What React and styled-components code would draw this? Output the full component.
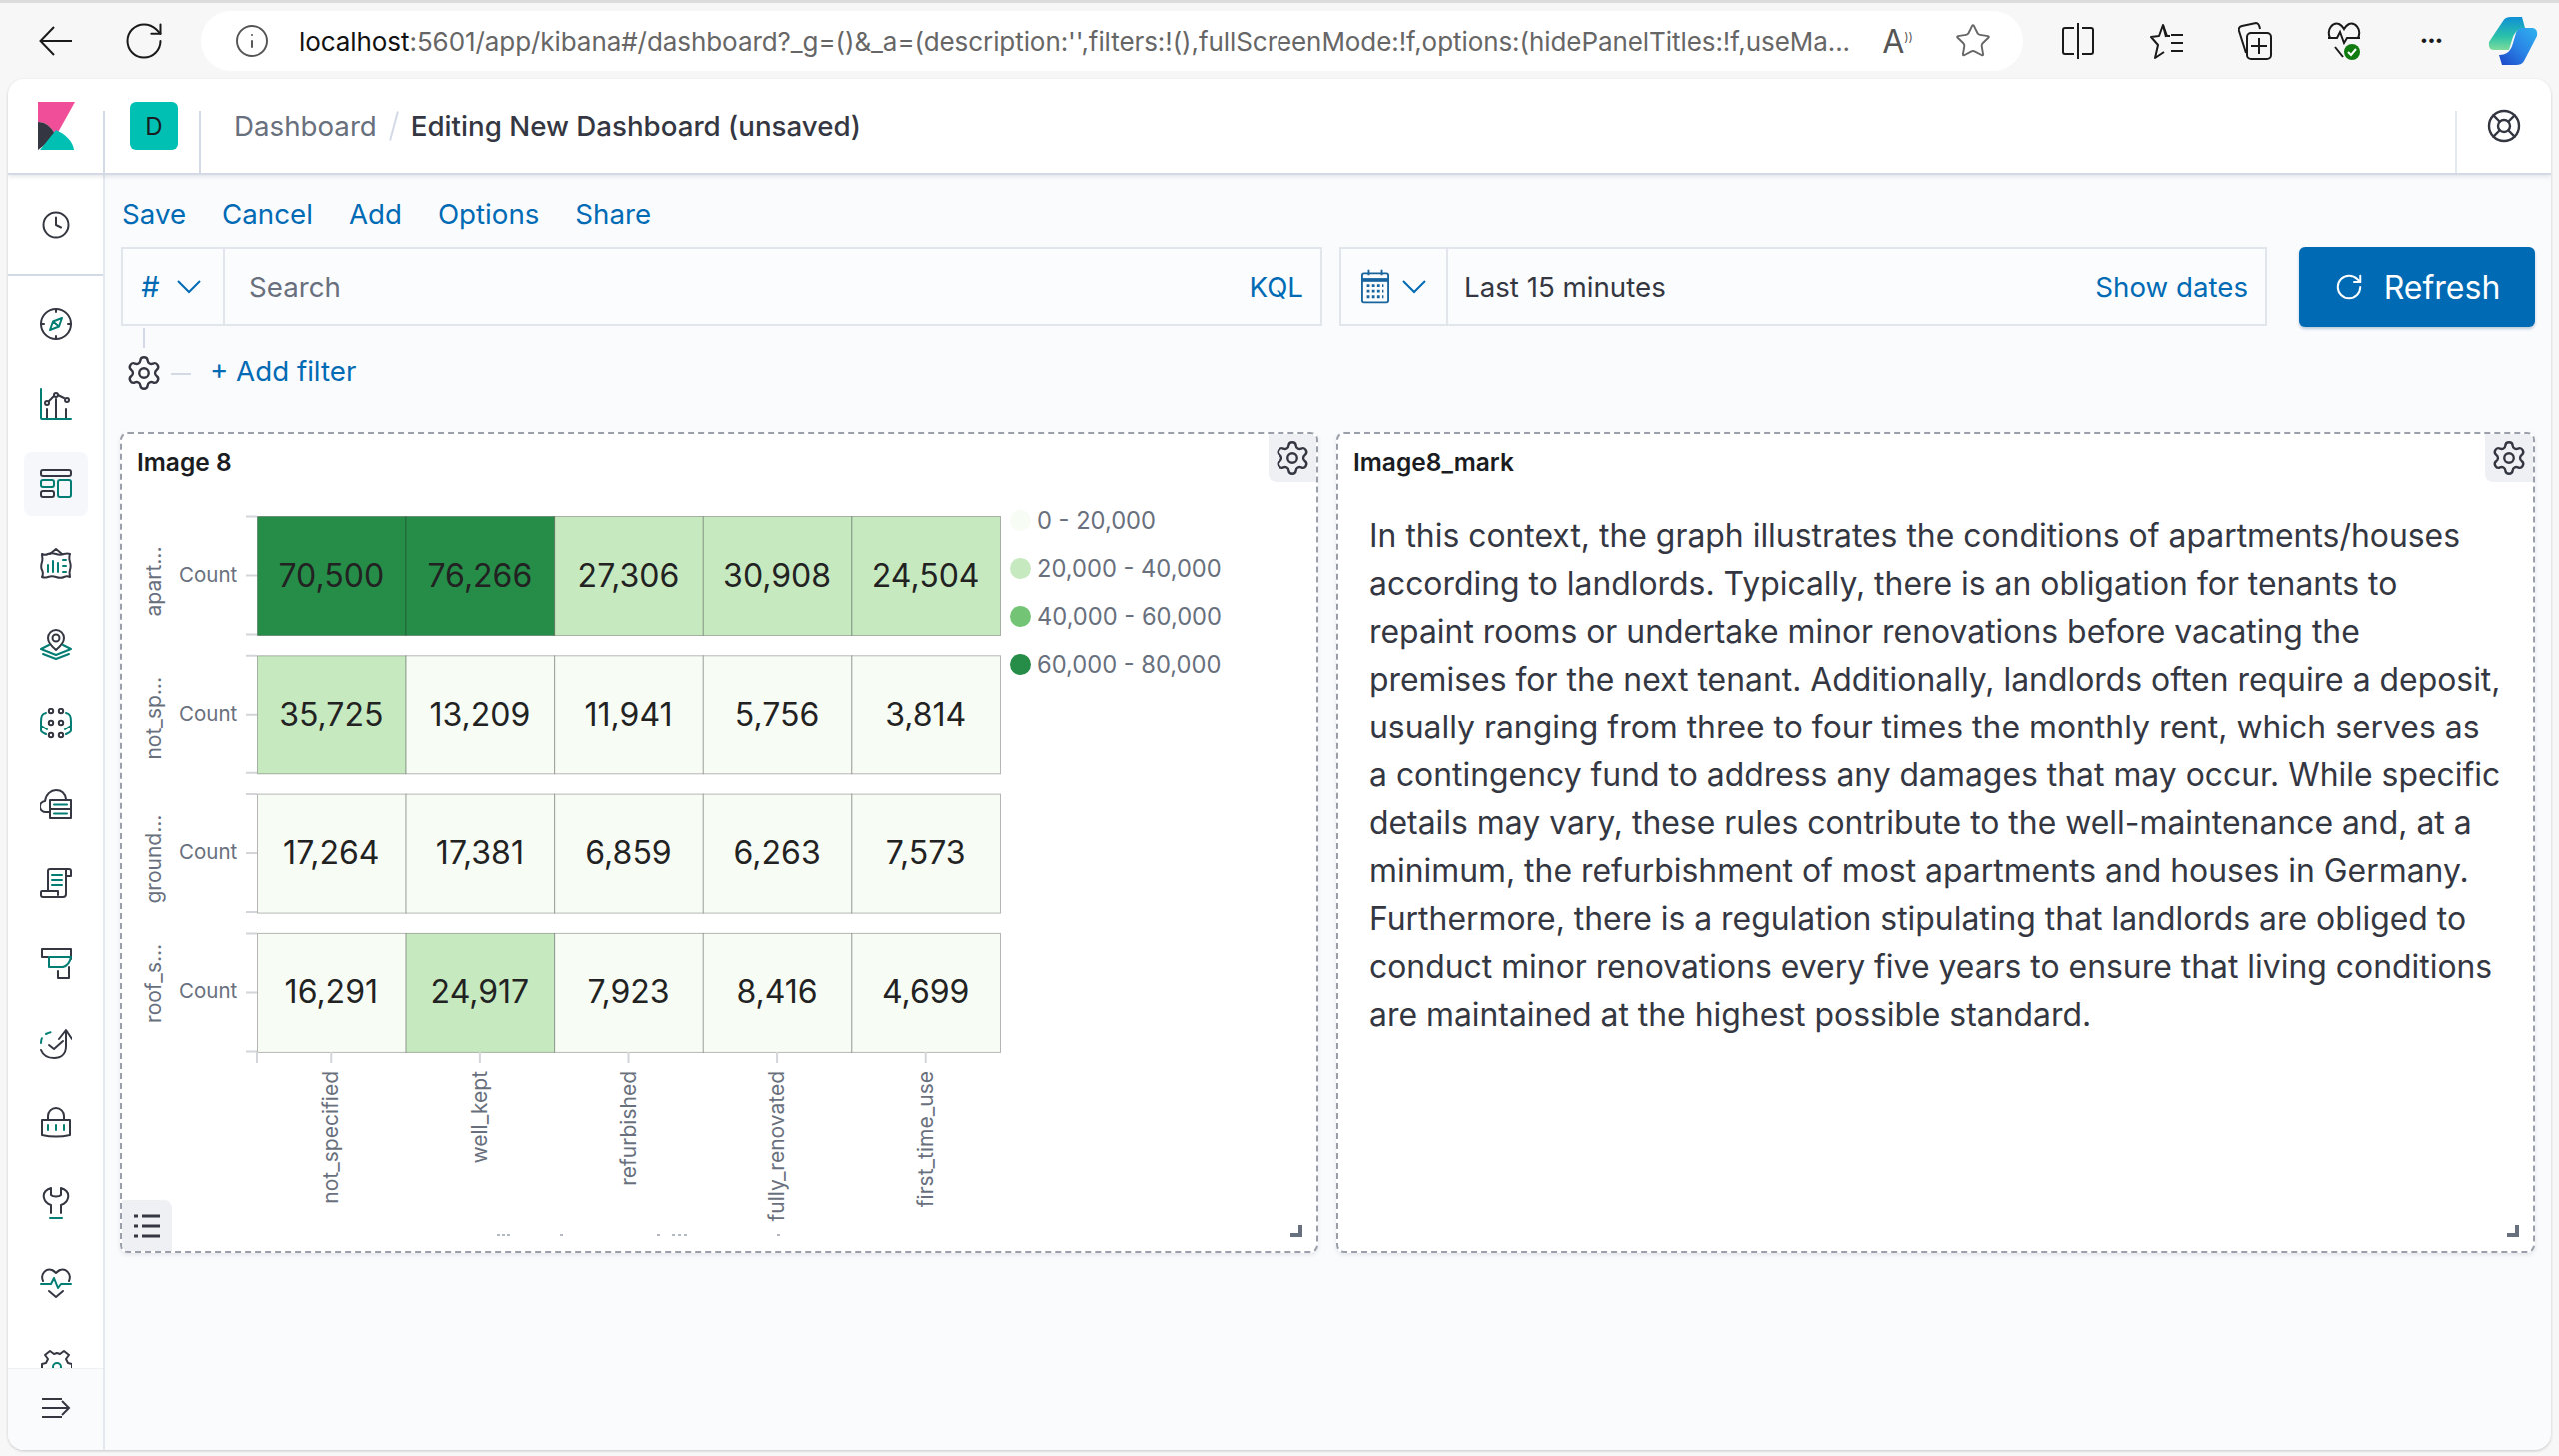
import React from 'react'
import styled, { createGlobalStyle } from 'styled-components'
import { Info, Star, RotateCw, Clock, Settings, LifeBuoy } from 'lucide-react'

const GlobalStyle = createGlobalStyle`
  html, body { margin: 0; padding: 0; background: #f7f7f7; }
  body { font-family: Inter, "Liberation Sans", sans-serif; color: #343741; }
  * { box-sizing: border-box; }
`

const INK = '#343741'
const TEAL = '#017d73'

// sidebar icons, drawn on a 32 box: dark strokes + teal accent strokes
const NavIcon = ({ dark, teal }) => (
  <svg width="32" height="32" viewBox="0 0 32 32" fill="none" strokeWidth="2" strokeLinecap="round" strokeLinejoin="round">
    <g stroke={INK}>{dark}</g>
    <g stroke={TEAL}>{teal}</g>
  </svg>
)

const navItems = [
  {
    dark: <><circle cx="16" cy="16" r="15" /><path d="M16 1v3M16 28v3M1 16h3M28 16h3" /></>,
    teal: <path d="M22 10l-9 3.500-3 8.500 9-3.500zM13 13.500l6 5" />,
  },
  {
    dark: <><path d="M7 30V21M16 30V11M26 30V21" /><path d="M9 13l5-5M18 7l6 3" /><circle cx="7" cy="15" r="2" /><circle cx="16" cy="7" r="2" /><circle cx="27" cy="12" r="2" /></>,
    teal: <path d="M1 1v29a1 1 0 0 0 1 1h29" />,
  },
  {
    dark: <><rect x="1" y="2" width="30" height="6" rx="2" /><rect x="1" y="23" width="13" height="6" rx="2" /></>,
    teal: <><rect x="1" y="12" width="13" height="7" rx="2" /><rect x="18" y="12" width="13" height="17" rx="2" /></>,
  },
  {
    dark: <><path d="M10 6L16 1l6 5" /><path d="M2 6c2 1 4 1 6 0s5-1 8 0 5 1 8 0 4-1 6 0c-1 3-1 5 0 8s1 5 0 8 0 5 0 7c-2-1-4-1-6 0s-5 1-8 0-5-1-8 0-4 1-6 0c1-2 1-5 0-7s-1-5 0-8 0-5 0-8z" /></>,
    teal: <path d="M8 17v7M13 13v11M18 15v9M23 12h3M23 18h3M23 24h3" />,
  },
  {
    dark: <path d="M16 22c-6-5-8-8-8-12a8 8 0 0 1 16 0c0 4-2 7-8 12zM16 6.500a3.500 3.500 0 1 1 0 7 3.500 3.500 0 0 1 0-7z" />,
    teal: <path d="M9 17L1 21l15 6 15-6-8-4M3 26l13 5 13-5" />,
  },
  {
    dark: <><circle cx="11" cy="3" r="2.200" /><circle cx="21" cy="3" r="2.200" /><circle cx="11" cy="15" r="2.200" /><circle cx="21" cy="15" r="2.200" /><circle cx="11" cy="28" r="2.200" /><circle cx="21" cy="28" r="2.200" /></>,
    teal: <path d="M6 5C2 6 1 8 1 14v9c0 2 3 3 5 4M26 5c4 1 5 3 5 9v9c0 2-3 3-5 4M1 18l6 4M31 18l-6 4" />,
  },
  {
    dark: <><path d="M9 25H6a5 5 0 0 1-1-11c1-7 6-11 11-11s9 3 10 9" /><rect x="10" y="13" width="21" height="18" /><path d="M10 22h21" /></>,
    teal: <path d="M14 17.500h13M14 26.500h13" />,
  },
  {
    dark: <path d="M8 24V4a2 2 0 0 1 2-2h19a2 2 0 0 1 2 2v5h-5M26 2v25a3 3 0 0 1-3 3H3a2 2 0 0 1-2-2v-3a1 1 0 0 1 1-1h16v4" />,
    teal: <path d="M12 8h10M12 13h10M12 18h10" />,
  },
  {
    dark: <path d="M8 10H2V2h29v10M29 20v11H18v-7" />,
    teal: <path d="M9 10h22c-1 5-4 9-8 10H9z" />,
  },
  {
    dark: <><path d="M9 18l5 4 9-8" /><path d="M26 4v15c0 8-5 12-12 12-6 0-11-3-13-8M19 12l7-9 6 9" /></>,
    teal: <path d="M1 16c0-2 0-3 1-5M6 7c2-1 4-2 7-2" strokeDasharray="5 3" />,
  },
  {
    dark: <><path d="M8 12V9a8 8 0 0 1 16 0v3" /><path d="M2 13h28v15c-9 2-19 2-28 0z" /></>,
    teal: <path d="M8 18v5M16 18v5M24 18v5" />,
  },
  {
    dark: <path d="M11 1C5 3 3 7 4 11c1 4 4 6 7 7v8M21 1c6 2 8 6 7 10-1 4-4 6-7 7v8M11 1v7c2 2 8 2 10 0V1" />,
    teal: <path d="M10 31h12" />,
  },
  {
    dark: <><path d="M3 14C0 7 6 1 12 3c2 1 3 2 4 3 1-1 2-2 4-3 6-2 12 4 9 11" /><path d="M9 24l7 6 7-6" /></>,
    teal: <path d="M1 17h10l3-6 4 10 3-4h10" />,
  },
  {
    dark: <path d="M2 24v-7l4-1 2-4-3-4 5-4 4 3 3-1 3 1 4-3 5 4-3 4 2 4 4 1v7" />,
    teal: <circle cx="17" cy="20" r="4" />,
  },
]

const cells = [
  ['apart...', 6, [['70,500', 3], ['76,266', 3], ['27,306', 1], ['30,908', 1], ['24,504', 1]]],
  ['not_sp...', 4, [['35,725', 1], ['13,209', 0], ['11,941', 0], ['5,756', 0], ['3,814', 0]]],
  ['ground...', 6, [['17,264', 0], ['17,381', 0], ['6,859', 0], ['6,263', 0], ['7,573', 0]]],
  ['roof_s...', -9, [['16,291', 0], ['24,917', 1], ['7,923', 0], ['8,416', 0], ['4,699', 0]]],
]
const shades = ['#f7fcf5', '#c7e9c0', '#74c476', '#258d48']
const columns = ['not_specified', 'well_kept', 'refurbished', 'fully_renovated', 'first_time_use']
const legend = ['0 - 20,000', '20,000 - 40,000', '40,000 - 60,000', '60,000 - 80,000']
// bits of a clipped axis title showing at the bottom of the chart
const clipped = [375, 380, 385, 438, 535, 550, 556, 562, 655]

const paragraph = [
  'In this context, the graph illustrates the conditions of apartments/houses',
  'according to landlords. Typically, there is an obligation for tenants to',
  'repaint rooms or undertake minor renovations before vacating the',
  'premises for the next tenant. Additionally, landlords often require a deposit,',
  'usually ranging from three to four times the monthly rent, which serves as',
  'a contingency fund to address any damages that may occur. While specific',
  'details may vary, these rules contribute to the well-maintenance and, at a',
  'minimum, the refurbishment of most apartments and houses in Germany.',
  'Furthermore, there is a regulation stipulating that landlords are obliged to',
  'conduct minor renovations every five years to ensure that living conditions',
  'are maintained at the highest possible standard.',
]

// heatmap: coordinates are relative to the svg, which starts at the panel body
const CELL_W = 148.6
const ROW_H = 119
const ROW_STEP = 139.3
const X0 = 135

function Heatmap () {
  return (
    <ChartSvg width="880" height="726" viewBox="0 0 880 726">
      {cells.map(([name, shift, row], r) => {
        const y = 3 + r * ROW_STEP
        return (
          <g key={name}>
            <AxisText transform={`translate(39 ${y + ROW_H / 2 + shift}) rotate(-90)`} textAnchor="middle" fontSize="21">{name}</AxisText>
            <AxisText x="57" y={y + ROW_H / 2 + 6} fontSize="20.500">Count</AxisText>
            <path d={`M124 ${y + 0.5}h11M124 ${y + ROW_H / 2}h11M124 ${y + ROW_H - 0.5}h11`} stroke="#d3d5d9" strokeWidth="2" />
            {row.map(([value, shade], c) => (
              <g key={c}>
                <rect
                  x={X0 + c * CELL_W + 0.5}
                  y={y + 0.5}
                  width={CELL_W}
                  height={ROW_H}
                  fill={shades[shade]}
                  stroke="#000"
                  strokeOpacity="0.28"
                />
                <CellText x={X0 + c * CELL_W + CELL_W / 2} y={y + ROW_H / 2 + 11} textAnchor="middle">{value}</CellText>
              </g>
            ))}
          </g>
        )
      })}
      <path d={`M${X0} 540v11`} stroke="#d3d5d9" strokeWidth="2" />
      {columns.map((name, c) => {
        const x = X0 + c * CELL_W + CELL_W / 2
        return (
          <g key={name}>
            <path d={`M${x} 540v11`} stroke="#d3d5d9" strokeWidth="2" />
            <AxisText transform={`translate(${x + 7} 559) rotate(-90)`} textAnchor="end" fontSize="21">{name}</AxisText>
          </g>
        )
      })}
      {clipped.map(x => <rect key={x} x={x} y="722" width="3" height="2" fill="#b5b9c0" />)}
    </ChartSvg>
  )
}

const Chevron = () => (
  <svg width="24" height="14" viewBox="0 0 24 14" fill="none" stroke="currentColor" strokeWidth="2"><path d="M1 1l11 11L23 1" /></svg>
)

const CalendarIcon = () => (
  <svg width="28" height="35" viewBox="0 0 30 36" fill="none" stroke="#17649e" strokeWidth="2">
    <rect x="1" y="4" width="28" height="31" rx="2" />
    <path d="M1 11h28" strokeWidth="4" />
    <path d="M8 0v6M22 0v6" />
    <path d="M6 17h18M6 23h18M6 29h18" strokeWidth="3" strokeDasharray="3 2.500" />
  </svg>
)

const SplitIcon = () => (
  <svg width="32" height="36" viewBox="0 0 32 36" fill="none" stroke="#1a1a1a" strokeWidth="2"><path d="M16 0v36M12 5H3a2 2 0 0 0-2 2v22a2 2 0 0 0 2 2h9M20 5h9a2 2 0 0 1 2 2v22a2 2 0 0 1-2 2h-9" /></svg>
)

const FavoritesIcon = () => (
  <svg width="34" height="36" viewBox="0 0 34 36" fill="none" stroke="#1a1a1a" strokeWidth="2" strokeLinejoin="round"><path d="M16 14l-3-12-4 11-8 1 7 8-3 13 9-6M21 12h12M21 20h12M21 28h12" /><path d="M13 2l4 11h3" /></svg>
)

const CollectionsIcon = () => (
  <svg width="34" height="38" viewBox="0 0 34 38" fill="none" stroke="#1a1a1a" strokeWidth="2"><path d="M8 31L1 9q-1-4 3-5l14-3q3 0 4 6" /><rect x="9" y="11" width="24" height="26" rx="4" /><path d="M21 16v16M13 24h16" /></svg>
)

const HealthIcon = () => (
  <svg width="34" height="40" viewBox="0 0 34 40" fill="none" stroke="#1a1a1a" strokeWidth="2">
    <path d="M3 17C-1 8 6 1 12 3c2 1 4 3 5 5 1-2 3-4 5-5 6-2 13 5 9 14M1 17h9l3-6 4 11 3-5h13M8 26l8 10" />
    <circle cx="25" cy="31" r="8" fill="#107c10" stroke="none" />
    <path d="M21 31l3 3 5-6" stroke="#fff" />
  </svg>
)

const CopilotIcon = () => (
  <svg width="50" height="50" viewBox="0 0 50 50">
    <defs>
      <linearGradient id="copilotA" x1="0" y1="0" x2="0" y2="1"><stop offset="0" stopColor="#0f8fd6" /><stop offset="0.6" stopColor="#2bc2a8" /><stop offset="1" stopColor="#7fdc9c" /></linearGradient>
      <linearGradient id="copilotB" x1="0" y1="1" x2="1" y2="0"><stop offset="0" stopColor="#1c46c8" /><stop offset="0.5" stopColor="#2a84e6" /><stop offset="1" stopColor="#2fb2ee" /></linearGradient>
    </defs>
    <path d="M15 5q2-4 8-4h11l3 11c-8 1-11 5-13 12l-3 10H5q-5-1-4-8z" fill="url(#copilotA)" />
    <path d="M36 45q-2 4-8 4H14l-3-10c8 0 12-4 14-12l3-10c1-3 4-5 8-5h9q5 1 4 8z" fill="url(#copilotB)" />
  </svg>
)

export default function App () {
  return (
    <Screen>
      <GlobalStyle />
      <BrowserBar>
        <BrowserIcon>
          <svg width="34" height="30" viewBox="0 0 34 30" fill="none" stroke="#1a1a1a" strokeWidth="2"><path d="M33 15H2M15 1L1.500 15 15 29" /></svg>
        </BrowserIcon>
        <BrowserIcon><RotateCw size={44} strokeWidth={1.1} color="#1a1a1a" /></BrowserIcon>
        <UrlPill>
          <Info size={36} strokeWidth={1.3} color="#555" />
          <UrlText><b>localhost</b>:5601/app/kibana#/dashboard?_g=()&amp;_a=(description:'',filters:!(),fullScreenMode:!f,options:(hidePanelTitles:!f,useMa...</UrlText>
          <ReadAloud>A<sup>))</sup></ReadAloud>
          <Star size={38} strokeWidth={1.2} color="#666" />
        </UrlPill>
        <Tools>
          <ToolSlot><SplitIcon /></ToolSlot>
          <ToolSlot><FavoritesIcon /></ToolSlot>
          <ToolSlot><CollectionsIcon /></ToolSlot>
          <ToolSlot><HealthIcon /></ToolSlot>
          <ToolSlot><MoreDots>•••</MoreDots></ToolSlot>
          <ToolSlot><CopilotIcon /></ToolSlot>
        </Tools>
      </BrowserBar>

      <Window>
        <Header>
          <LogoCell>
            <svg width="37" height="48" viewBox="0 0 37 48">
              <path d="M0 0h37L18 34C13 24 7 20 0 20z" fill="#f04e98" />
              <path d="M0 20c7 0 13 4 18 14L0 48z" fill="#343741" />
              <path d="M2 48l16-20c9 4 17 11 18 20z" fill="#00bfb3" />
            </svg>
          </LogoCell>
          <SpaceCell><SpaceBadge>D</SpaceBadge></SpaceCell>
          <Crumbs>
            <CrumbLink>Dashboard</CrumbLink>
            <CrumbSlash />
            <CrumbCurrent>Editing New Dashboard (unsaved)</CrumbCurrent>
          </Crumbs>
          <HelpCell><LifeBuoy size={36} strokeWidth={1.6} /></HelpCell>
        </Header>

        <Body>
          <Sidebar>
            <RecentBlock><Clock size={30} strokeWidth={1.6} color={INK} /></RecentBlock>
            <NavList>
              {navItems.map((item, i) => (
                <NavItem key={i} $active={i === 2}><NavIcon dark={item.dark} teal={item.teal} /></NavItem>
              ))}
            </NavList>
            <Collapse>
              <svg width="30" height="24" viewBox="0 0 30 24" fill="none" stroke={INK} strokeWidth="2"><path d="M1 3h20M1 12h27M1 21h20M21 5l7 7-7 7" /></svg>
            </Collapse>
          </Sidebar>

          <Main>
            <TopNav>
              {['Save', 'Cancel', 'Add', 'Options', 'Share'].map(label => <TopLink key={label}>{label}</TopLink>)}
            </TopNav>

            <QueryRow>
              <SearchBox>
                <Prefix $width={102}><Hash>#</Hash><Chevron /></Prefix>
                <Placeholder>Search</Placeholder>
                <Lang>KQL</Lang>
              </SearchBox>
              <DateBox>
                <Prefix $width={107}><CalendarIcon /><Chevron /></Prefix>
                <DateText>Last 15 minutes</DateText>
                <Lang>Show dates</Lang>
              </DateBox>
              <RefreshButton><RotateCw size={30} strokeWidth={1.6} />Refresh</RefreshButton>
            </QueryRow>

            <FilterRow>
              <FilterGear><Settings size={38} strokeWidth={1.5} /></FilterGear>
              <FilterDash />
              <AddFilter>+ Add filter</AddFilter>
            </FilterRow>

            <Panels>
              <Panel>
                <PanelTitle>Image 8</PanelTitle>
                <GearButton><Settings size={38} strokeWidth={1.5} /></GearButton>
                <ChartRow>
                  <Heatmap />
                  <Legend>
                    {legend.map((label, i) => (
                      <LegendItem key={label}><LegendDot $color={shades[i]} />{label}</LegendItem>
                    ))}
                  </Legend>
                </ChartRow>
                <ListButton>
                  <svg width="26" height="24" viewBox="0 0 26 24" stroke="#343741" strokeWidth="3"><path d="M0 2h4M0 12h4M0 22h4" /><path d="M8 2h18M8 12h18M8 22h18" /></svg>
                </ListButton>
                <ResizeHandle />
              </Panel>
              <Panel>
                <PanelTitle>Image8_mark</PanelTitle>
                <GearButton><Settings size={38} strokeWidth={1.5} /></GearButton>
                <Markdown>
                  {paragraph.map(line => <Line key={line}>{line}</Line>)}
                </Markdown>
                <ResizeHandle />
              </Panel>
            </Panels>
          </Main>
        </Body>
      </Window>
    </Screen>
  )
}

const Screen = styled.div`
  width: 2560px;
  height: 1457px;
  overflow: hidden;
  background: #f7f7f7;
  border-top: 3px solid #dcdcdc;
  display: flex;
  flex-direction: column;
`

const BrowserBar = styled.div`
  height: 76px;
  flex: none;
  display: flex;
  align-items: center;
  padding: 0 0 0 30px;
`

const BrowserIcon = styled.div`
  width: 52px;
  margin-right: 36px;
  display: flex;
  justify-content: center;
  color: #1a1a1a;
`

const UrlPill = styled.div`
  width: 1823px;
  flex: none;
  height: 60px;
  margin-left: -5px;
  padding: 0 31px 0 33px;
  border-radius: 30px;
  background: #fff;
  display: flex;
  align-items: center;
  color: #555;
`

const UrlText = styled.div`
  flex: 1;
  min-width: 0;
  margin-left: 29px;
  font: 26px "Inter", sans-serif;
  letter-spacing: -0.07px;
  white-space: nowrap;
  overflow: hidden;
  color: #666;
  b { font-weight: 400; color: #111; }
`

const ReadAloud = styled.span`
  flex: none;
  font-size: 32px;
  margin: 0 41px 0 20px;
  sup { font-size: 12px; }
`

const Tools = styled.div`
  flex: 1;
  display: flex;
  align-items: center;
  padding-left: 11px;
  color: #1a1a1a;
`

const ToolSlot = styled.div`
  width: 88.5px;
  display: flex;
  justify-content: center;
  align-items: center;
  &:last-child { margin-left: -8px; }
`

const MoreDots = styled.span`
  font: 17px "Liberation Sans", sans-serif;
  letter-spacing: 1.5px;
`

const Window = styled.div`
  margin: 0 8px 6px;
  flex: 1;
  min-height: 0;
  border-radius: 16px;
  background: #fafbfd;
  box-shadow: 0 1px 3px rgba(0, 0, 0, 0.2);
  overflow: hidden;
  display: flex;
  flex-direction: column;
`

const Header = styled.div`
  height: 96px;
  flex: none;
  background: #fff;
  display: flex;
  align-items: stretch;
  border-bottom: 2px solid #d3dae6;
  box-shadow: 0 2px 4px rgba(65, 78, 101, 0.12);
  z-index: 1;
`

const LogoCell = styled.div`
  width: 97px;
  display: flex;
  align-items: center;
  padding-left: 30px;
  position: relative;
  &::after {
    content: '';
    position: absolute;
    right: 0;
    top: 32px;
    bottom: 0;
    width: 2px;
    background: #d3dae6;
  }
`

const SpaceCell = styled(LogoCell)`
  width: 96px;
  padding-left: 25px;
`

const SpaceBadge = styled.div`
  width: 48px;
  height: 48px;
  border-radius: 6px;
  background: #00bfb3;
  display: flex;
  align-items: center;
  justify-content: center;
  font-size: 24px;
  color: #1a1c21;
`

const Crumbs = styled.div`
  flex: 1;
  display: flex;
  align-items: center;
  padding-left: 33px;
  font-size: 27.700px;
`

const CrumbLink = styled.span`
  color: #69707d;
`

const CrumbSlash = styled.span`
  width: 2px;
  height: 30px;
  margin: 0 16px;
  background: #d3dae6;
  transform: rotate(15deg);
`

const CrumbCurrent = styled.span`
  font-weight: 500;
  color: #343741;
`

const HelpCell = styled.div`
  width: 96px;
  display: flex;
  align-items: center;
  justify-content: center;
  border-left: 2px solid #e4e8ef;
  margin-top: 32px;
  & > svg { margin-top: -32px; }
`

const Body = styled.div`
  flex: 1;
  min-height: 0;
  display: flex;
`

const Sidebar = styled.div`
  width: 97px;
  flex: none;
  background: #fff;
  border-right: 2px solid #e4e8ef;
  display: flex;
  flex-direction: column;
`

const RecentBlock = styled.div`
  height: 101px;
  flex: none;
  display: flex;
  align-items: center;
  justify-content: center;
  border-bottom: 2px solid #d3dae6;
`

const NavList = styled.div`
  flex: 1;
  min-height: 0;
  overflow: hidden;
  padding-top: 16px;
`

const NavItem = styled.div`
  height: 64px;
  width: 64px;
  margin: 0 auto 16px;
  border-radius: 8px;
  display: flex;
  align-items: center;
  justify-content: center;
  background: ${p => (p.$active ? '#f5f7fa' : 'transparent')};
`

const Collapse = styled.div`
  height: 82px;
  flex: none;
  padding-bottom: 4px;
  background: #fafbfd;
  border-top: 1px solid #eef0f4;
  display: flex;
  align-items: center;
  justify-content: center;
`

const Main = styled.div`
  flex: 1;
  min-width: 0;
  padding: 0 16px 0 15px;
`

const TopNav = styled.div`
  height: 72px;
  padding: 6px 0 0 2px;
  display: flex;
  align-items: center;
  gap: 36px;
`

const TopLink = styled.span`
  font-size: 27.700px;
  color: #006bb4;
`

const QueryRow = styled.div`
  display: flex;
  align-items: flex-start;
  height: 80px;
  padding-left: 1px;
`

const FieldBox = styled.div`
  height: 79px;
  display: flex;
  align-items: center;
  border: 2px solid #e1e5ec;
  background: #fbfcfd;
  padding-right: 17px;
`

const SearchBox = styled(FieldBox)`
  width: 1202px;
`

const DateBox = styled(FieldBox)`
  width: 928px;
  margin-left: 17px;
`

const Prefix = styled.div`
  width: ${p => p.$width}px;
  height: 100%;
  flex: none;
  display: flex;
  align-items: center;
  justify-content: center;
  gap: 13px;
  border-right: 2px solid #e1e5ec;
  color: #006bb4;
`

const Hash = styled.span`
  font-size: 29px;
  margin: 0 4px 0 -4px;
`

const Placeholder = styled.div`
  flex: 1;
  padding-left: 24px;
  font-size: 27.700px;
  color: #69707d;
`

const DateText = styled(Placeholder)`
  color: #343741;
  padding-left: 16px;
`

const Lang = styled.span`
  font-size: 27.700px;
  color: #006bb4;
`

const RefreshButton = styled.div`
  width: 236px;
  height: 80px;
  margin-left: 32px;
  border-radius: 6px;
  background: #006bb4;
  color: #fff;
  font-size: 32px;
  display: flex;
  align-items: center;
  justify-content: center;
  gap: 20px;
  box-shadow: 0 2px 3px rgba(0, 60, 120, 0.25);
`

const FilterRow = styled.div`
  height: 105px;
  display: flex;
  align-items: flex-start;
  padding-top: 27px;
  position: relative;
  &::before {
    content: '';
    position: absolute;
    left: 23px;
    top: 1px;
    width: 2px;
    height: 20px;
    background: #d3dae6;
  }
`

const FilterGear = styled.div`
  width: 48px;
  padding-left: 5px;
  height: 38px;
  color: #343741;
`

const FilterDash = styled.div`
  width: 20px;
  height: 2px;
  margin: 19px 0 0 3px;
  background: #d3dae6;
`

const AddFilter = styled.span`
  margin: 1px 0 0 19px;
  font-size: 27.700px;
  line-height: 32px;
  color: #006bb4;
`

const Panels = styled.div`
  display: flex;
  gap: 18px;
  height: 822px;
`

const Panel = styled.div`
  flex: 1;
  min-width: 0;
  position: relative;
  background: #fff;
  border: 2px dashed #9a9fa9;
  border-radius: 8px;
  box-shadow: 0 2px 4px rgba(65, 78, 101, 0.12);
  overflow: hidden;
`

const PanelTitle = styled.div`
  height: 56px;
  padding: 0 0 0 15px;
  display: flex;
  align-items: center;
  font-size: 24.500px;
  font-weight: 600;
  color: #1a1c21;
`

const GearButton = styled.div`
  position: absolute;
  top: 0;
  right: 0;
  width: 48px;
  height: 48px;
  background: #eef0f3;
  border-bottom-left-radius: 8px;
  color: #343741;
  display: flex;
  align-items: center;
  justify-content: center;
`

const ChartRow = styled.div`
  display: flex;
  align-items: flex-start;
`

const ChartSvg = styled.svg`
  flex: none;
  margin-top: 23px;
`

const AxisText = styled.text`
  font-family: Inter, sans-serif;
  fill: #69707d;
`

const CellText = styled.text`
  font-family: Inter, sans-serif;
  font-size: 32px;
  fill: #222;
`

const Legend = styled.div`
  margin-top: 6px;
  margin-left: 8px;
`

const LegendItem = styled.div`
  height: 48px;
  display: flex;
  align-items: center;
  gap: 6px;
  font-size: 23.700px;
  color: #69707d;
  white-space: nowrap;
`

const LegendDot = styled.span`
  width: 21px;
  height: 21px;
  border-radius: 50%;
  background: ${p => p.$color};
`

const ListButton = styled.div`
  position: absolute;
  left: 0;
  bottom: 0;
  width: 50px;
  height: 51px;
  background: #eef0f3;
  border-top-right-radius: 8px;
  display: flex;
  align-items: center;
  justify-content: center;
`

const ResizeHandle = styled.div`
  position: absolute;
  right: 14px;
  bottom: 14px;
  width: 12px;
  height: 12px;
  border-right: 4px solid #69707d;
  border-bottom: 4px solid #69707d;
`

const Markdown = styled.div`
  padding: 22px 0 0 31px;
`

const Line = styled.div`
  font-size: 31.900px;
  line-height: 48px;
  color: #343741;
  white-space: nowrap;
`
